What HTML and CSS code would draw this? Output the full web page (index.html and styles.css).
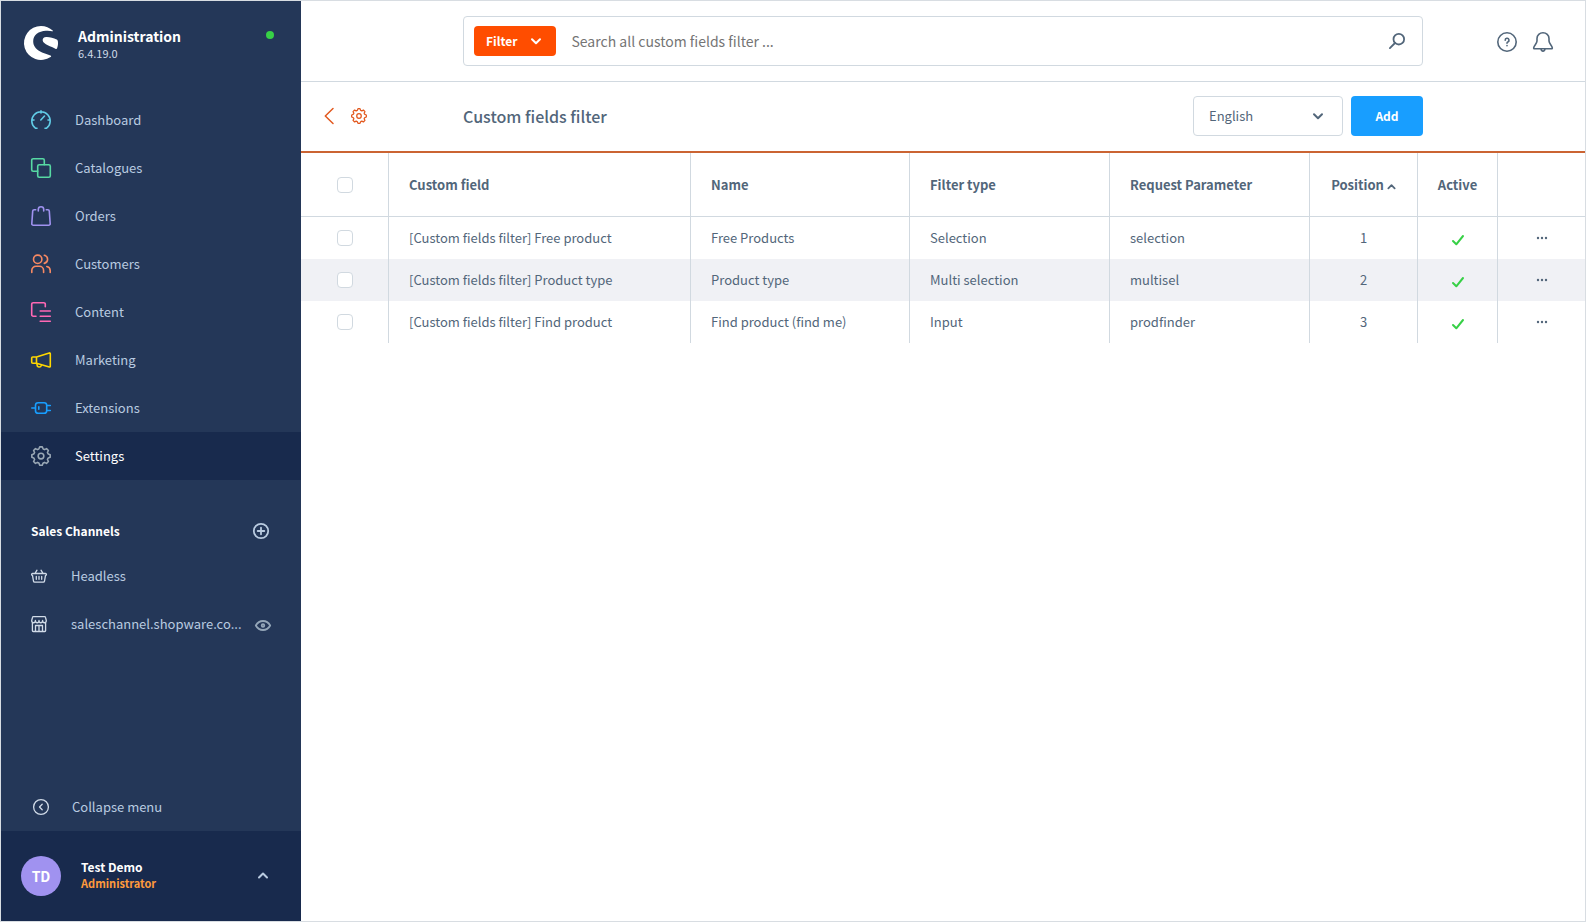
FILE: index.html
```html
<!DOCTYPE html>
<html lang="en">
<head>
<meta charset="utf-8">
<title>Custom fields filter | Administration</title>
<link rel="stylesheet" href="styles.css">
</head>
<body>
<svg class="sprite" aria-hidden="true">
  <symbol id="gear" viewBox="-12 -12 24 24">
    <path d="M-1.5-11 1.5-11Q2.4-8.6 2.7-8.4L4.2-7.7 6.6-8.9 8.9-6.6 7.7-4.2 8.4-2.7Q8.6-2.4 11-1.5L11 1.5Q8.6 2.4 8.4 2.7L7.7 4.2 8.9 6.6 6.6 8.9 4.2 7.7 2.7 8.4Q2.4 8.6 1.5 11L-1.5 11Q-2.4 8.6-2.7 8.4L-4.2 7.7-6.6 8.9-8.9 6.6-7.7 4.2-8.4 2.7Q-8.6 2.4-11 1.5L-11-1.5Q-8.6-2.4-8.4-2.7L-7.7-4.2-8.9-6.6-6.6-8.9-4.2-7.7-2.7-8.4Q-2.4-8.6-1.5-11Z"/>
    <circle r="3.4"/>
  </symbol>
  <symbol id="check" viewBox="0 0 14 12"><path d="M2 7l3.3 3.3L12 2"/></symbol>
  <symbol id="dots" viewBox="0 0 12 4"><circle cx="2" cy="2" r="1.2"/><circle cx="6" cy="2" r="1.2"/><circle cx="10" cy="2" r="1.2"/></symbol>
</svg>
<div class="app">
  <aside class="sidebar">
    <header class="brand">
      <svg class="logo" viewBox="0 0 34 34" aria-hidden="true">
        <path d="M28.7 4.6C25.700 1.900 21.500 0 17 0A17 17 0 1 0 26.600 31C27.400 30.400 27.300 29.800 26.400 29.400C20 27.200 9.200 24.500 9.200 15.200C9.200 9 14.500 5.200 22 4.800C24.500 4.600 26.500 4.900 28.200 5.300C29.100 5.500 29.200 5 28.700 4.600Z"/>
        <path d="M33.900 15.600C33.700 14.500 33.400 14.100 32.700 13.600C29.500 11.600 25.500 10.800 22.300 10.900C19.800 11 18.400 12.500 18.700 14.400C19.200 18.300 27.500 20.300 31.800 22.900C32.400 23.200 32.800 23 33.100 22.300C33.900 20.200 34.200 17.900 33.900 15.600Z"/>
      </svg>
      <div class="brand-text">
        <strong class="brand-name">Administration</strong>
        <span class="brand-version">6.4.19.0</span>
      </div>
      <span class="status-dot"></span>
    </header>
    <nav class="nav" aria-label="Main">
      <a class="nav-item" href="#"><svg class="icon-20 cyan" viewBox="0 0 20 20"><path d="M6 18.200H4.400A9.200 9.200 0 1 1 15.600 18.200H14M10 .9V3M.9 10H3M17 10h2.100M9.800 10 13.500 6"/></svg>Dashboard</a>
      <a class="nav-item" href="#"><svg class="icon-20 green" viewBox="0 0 20 20"><path d="M6.700 13.300H2.200A1.500 1.500 0 0 1 .7 11.800V2.200A1.500 1.500 0 0 1 2.200.7h9.600a1.500 1.500 0 0 1 1.500 1.500v4.500"/><rect x="6.700" y="6.700" width="12.600" height="12.600" rx="1.500"/></svg>Catalogues</a>
      <a class="nav-item" href="#"><svg class="icon-20 purple" viewBox="0 0 20 20"><path d="M4.700 3.700H3.200A1.500 1.500 0 0 0 1.700 5.100L.8 17.700a1.500 1.500 0 0 0 1.500 1.600h15.400a1.500 1.500 0 0 0 1.500-1.600l-.9-12.600a1.500 1.500 0 0 0-1.500-1.400H15.300M7.300 5V3.300a2.700 2.600 0 0 1 5.400 0V5"/></svg>Orders</a>
      <a class="nav-item" href="#"><svg class="icon-20 coral" viewBox="0 0 20 20"><circle cx="6.700" cy="5.300" r="4.200"/><path d="M.8 18.500v-2a4.200 4.200 0 0 1 4.200-4.200h3.400a4.200 4.200 0 0 1 4.200 4.200v2M13.300 1.200a4.200 4.200 0 0 1 0 8.200M15.800 12.500a4.200 4.200 0 0 1 3.400 4v2"/></svg>Customers</a>
      <a class="nav-item" href="#"><svg class="icon-20 pink" viewBox="0 0 20 20"><path d="M5 14.200H2.200A1.500 1.500 0 0 1 .7 12.700V2.200A1.500 1.500 0 0 1 2.200.7h10.600a1.500 1.500 0 0 1 1.500 1.500v2.600M9.200 9h10.100M9.200 14.200h10.100M9.200 19.300h10.100"/></svg>Content</a>
      <a class="nav-item" href="#"><svg class="icon-20 yellow" viewBox="0 0 20 20"><path d="M5.500 7H1.700a1 1 0 0 0-1 1v4.200a1 1 0 0 0 1 1h3.800M5.500 7v6.200L18.300 17a.8.8 0 0 0 1-.8V3.700a.8.8 0 0 0-1-.8L5.500 7M6 13.500v1.200a2.200 2.200 0 0 0 4.300.7"/></svg>Marketing</a>
      <a class="nav-item" href="#"><svg class="icon-20 blue" viewBox="0 0 20 20"><path d="M.8 10h3.600M15.800 7.500h3.500M15.800 12.500h3.500M7.800 8.800v2.400"/><rect x="4.500" y="4.700" width="11.200" height="10.600" rx="2.600"/></svg>Extensions</a>
      <a class="nav-item active" href="#" aria-current="page"><svg class="icon-20 gray" viewBox="0 0 20 20"><use href="#gear" width="20" height="20"/></svg>Settings</a>
    </nav>
    <section class="channels">
      <div class="channels-head">
        <h2 class="channels-title">Sales Channels</h2>
        <button class="icon-btn" type="button" aria-label="Add sales channel"><svg class="icon-16 bold" viewBox="0 0 16 16"><circle cx="8" cy="8" r="7.200"/><path d="M8 4.700v6.600M4.700 8h6.600"/></svg></button>
      </div>
      <a class="channel" href="#"><svg class="icon-16 light" viewBox="0 0 16 16"><path d="M1.500 5.500h13a.9.9 0 0 1 .9 1.100.9.9 0 0 1-.9.800l-1 5.800a1.200 1.200 0 0 1-1.200 1H3.700a1.200 1.200 0 0 1-1.200-1l-1-5.800a.9.9 0 0 1-.9-.8.9.9 0 0 1 .9-1.100ZM4 5.300 6 2.200M12 5.300l-2-3.100M5.300 8.500v2.800M8 8.500v2.800M10.700 8.500v2.800"/></svg><span class="channel-name">Headless</span></a>
      <a class="channel" href="#"><svg class="icon-16 light" viewBox="0 0 16 16"><path d="M1.400 7v7.700a.8.800 0 0 0 .8.800h11.600a.8.800 0 0 0 .8-.8V7M.7 4.500 1.500 1.400A1 1 0 0 1 2.500.6h11a1 1 0 0 1 1 .8l.8 3.100M.7 4.500c0 3 3.600 3 3.700 0 .1 3 3.500 3 3.600 0 .1 3 3.500 3 3.600 0 .1 3 3.700 3 3.700 0M4.500 15.300V9.500h7v5.800M8 9.500v5.800"/></svg><span class="channel-name">saleschannel.shopware.co...</span><svg class="icon-16 muted" viewBox="0 0 16 16"><path d="M.8 9.500C2.500 6.500 5 5 8 5s5.500 1.500 7.200 4.500C13.500 12.500 11 14 8 14S2.500 12.500.8 9.500Z"/><circle cx="8" cy="9.500" r="1.300"/></svg></a>
    </section>
    <button class="collapse" type="button"><svg class="icon-16 light" viewBox="0 0 16 16"><circle cx="8" cy="8" r="7.400"/><path d="M9.200 5.300 6.500 8l2.700 2.700"/></svg>Collapse menu</button>
    <button class="user" type="button">
      <span class="avatar">TD</span>
      <span class="user-text"><span class="user-name">Test Demo</span><span class="user-role">Administrator</span></span>
      <svg class="icon-10" viewBox="0 0 10 10"><path d="M1 6.500 5 2.500l4 4"/></svg>
    </button>
  </aside>
  <main class="main">
    <header class="topbar">
      <form class="search" role="search">
        <button class="filter-btn" type="button">Filter<svg class="icon-10" viewBox="0 0 10 10"><path d="M1 3.300l4 4 4-4"/></svg></button>
        <input class="search-input" type="search" aria-label="Search" placeholder="Search all custom fields filter ...">
        <button class="icon-btn" type="submit" aria-label="Search"><svg class="icon-16 bold" viewBox="0 0 16 16"><circle cx="9.800" cy="6.200" r="5.300"/><path d="M6 10 .9 15.100"/></svg></button>
      </form>
      <div class="tools">
        <button class="icon-btn" type="button" aria-label="Help"><svg class="icon-20" viewBox="0 0 20 20"><circle cx="10" cy="10" r="9.200"/><path d="M8.200 8.200a1.900 1.900 0 1 1 2.700 1.700c-.6.300-.9.700-.9 1.300M10 13.500v.2"/></svg></button>
        <button class="icon-btn" type="button" aria-label="Notifications"><svg class="icon-20" viewBox="0 0 20 20"><path d="M4 8v-1.500a6 5.800 0 0 1 12 0V9c0 2.500 3 4.500 3.300 6.800.1.700-.3 1-.9 1H1.600c-.6 0-1-.3-.9-1C1 13.500 4 11.500 4 9ZM8 17c.3 2.800 3.700 2.800 4 0"/></svg></button>
      </div>
    </header>
    <div class="pagebar">
      <div class="crumbs">
        <a class="crumb" href="#" aria-label="Back"><svg class="icon-16" viewBox="0 0 16 16"><path d="M12 .5 4.300 8l7.700 7.500"/></svg></a>
        <a class="crumb" href="#" aria-label="Settings"><svg class="icon-16" viewBox="0 0 16 16"><use href="#gear" width="16" height="16"/></svg></a>
      </div>
      <div class="pagebar-main">
        <h1 class="page-title">Custom fields filter</h1>
        <div class="select-wrap">
          <select class="language" aria-label="Language"><option>English</option></select>
          <svg class="icon-10 select-arrow" viewBox="0 0 10 10"><path d="M1 3.300l4 4 4-4"/></svg>
        </div>
        <button class="add-btn" type="button">Add</button>
      </div>
    </div>
    <table class="grid">
      <colgroup><col class="c-check"><col class="c-field"><col><col class="c-type"><col class="c-type"><col class="c-pos"><col class="c-active"><col class="c-actions"></colgroup>
      <thead>
        <tr><th class="center"><input class="check" type="checkbox" aria-label="Select all"></th><th>Custom field</th><th>Name</th><th>Filter type</th><th>Request Parameter</th><th class="center" aria-sort="ascending">Position <svg class="sort" viewBox="0 0 10 10"><path d="M1.500 8.200 5 4.700l3.500 3.500"/></svg></th><th class="center">Active</th><th></th></tr>
      </thead>
      <tbody>
        <tr><td class="center"><input class="check" type="checkbox" aria-label="Select Free Products"></td><td>[Custom fields filter] Free product</td><td>Free Products</td><td>Selection</td><td>selection</td><td class="center">1</td><td class="center"><svg class="tick"><use href="#check"/></svg></td><td class="center"><button class="more" type="button" aria-label="Actions"><svg class="dots"><use href="#dots"/></svg></button></td></tr>
        <tr><td class="center"><input class="check" type="checkbox" aria-label="Select Product type"></td><td>[Custom fields filter] Product type</td><td>Product type</td><td>Multi selection</td><td>multisel</td><td class="center">2</td><td class="center"><svg class="tick"><use href="#check"/></svg></td><td class="center"><button class="more" type="button" aria-label="Actions"><svg class="dots"><use href="#dots"/></svg></button></td></tr>
        <tr><td class="center"><input class="check" type="checkbox" aria-label="Select Find product"></td><td>[Custom fields filter] Find product</td><td>Find product (find me)</td><td>Input</td><td>prodfinder</td><td class="center">3</td><td class="center"><svg class="tick"><use href="#check"/></svg></td><td class="center"><button class="more" type="button" aria-label="Actions"><svg class="dots"><use href="#dots"/></svg></button></td></tr>
      </tbody>
    </table>
  </main>
</div>
</body>
</html>
```

FILE: styles.css
```css
* { box-sizing: border-box; }

body {
  margin: 0;
  font-family: "Source Sans Pro", "Noto Sans CJK SC", "Noto Sans", sans-serif;
  font-size: 13px;
  line-height: 18px;
  color: #52667a;
  background: #fff;
}

button, input, select { font: inherit; color: inherit; }
button { padding: 0; border: 0; background: none; cursor: pointer; }
a { color: inherit; text-decoration: none; }

svg {
  flex: none;
  overflow: visible;
  fill: none;
  stroke: currentColor;
  stroke-width: 1.6;
  stroke-linecap: round;
  stroke-linejoin: round;
}
.sprite { position: absolute; width: 0; height: 0; }
#gear { stroke-width: 1.9; }

.icon-20 { width: 20px; height: 20px; }
.icon-16 { width: 16px; height: 16px; stroke-width: 1.3; }
.icon-10 { width: 10px; height: 10px; stroke-width: 2; }
.icon-16.bold { stroke-width: 1.8; }

.cyan { color: #61cce6; }
.green { color: #57d9a3; }
.purple { color: #a092f0; }
.coral { color: #f88962; }
.pink { color: #ff68b4; }
.yellow { color: #ffd700; }
.blue { color: #189eff; }
.gray { color: #9aa8b5; }
.light { color: #d1dbe8; }
.icon-16.muted { color: #94a6b8; stroke-width: 1.8; }

.app {
  display: flex;
  min-height: 100vh;
  border: 1px solid #d8dde2;
}

/* Sidebar */
.sidebar {
  display: flex;
  flex: none;
  flex-direction: column;
  width: 300px;
  color: #b9cbe0;
  background: #243758;
}
.brand {
  display: flex;
  align-items: flex-start;
  gap: 20px;
  padding: 25px 27px 36px 23px;
}
.logo { width: 34px; height: 34px; fill: #fff; stroke: none; }
.brand-text { display: flex; flex: 1; flex-direction: column; }
.brand-name { font-size: 14px; line-height: 20px; color: #fff; }
.brand-version { font-size: 11px; line-height: 14px; color: #d1dbe8; }
.status-dot {
  width: 8px;
  height: 8px;
  margin-top: 5px;
  border-radius: 50%;
  background: #37d046;
}
.nav-item {
  display: flex;
  align-items: center;
  gap: 24px;
  height: 48px;
  padding: 0 30px;
}
.nav-item.active { color: #fff; background: #182a4d; }

.channels { padding: 30px 30px 0; }
.channels-head {
  display: flex;
  align-items: center;
  justify-content: space-between;
  height: 42px;
  padding-right: 2px;
}
.channels-title { margin: 0; font-size: 12px; line-height: 18px; color: #fff; }
.channel {
  display: flex;
  align-items: center;
  height: 48px;
}
.channel-name {
  flex: 1;
  margin: 0 8px 0 24px;
  white-space: nowrap;
}
.icon-btn { display: flex; }
.collapse {
  display: flex;
  align-items: center;
  gap: 23px;
  height: 48px;
  margin-top: auto;
  padding: 0 32px;
}
.user {
  display: flex;
  align-items: center;
  gap: 20px;
  height: 90px;
  padding: 0 33px 0 20px;
  font-size: 12px;
  font-weight: 700;
  text-align: left;
  background: #182a4d;
}
.avatar {
  width: 40px;
  font-size: 14px;
  line-height: 40px;
  text-align: center;
  color: #fff;
  border-radius: 50%;
  background: #a092f0;
}
.user-text { display: flex; flex: 1; flex-direction: column; padding-bottom: 2px; line-height: 17px; }
.user-name { color: #fff; }
.user-role { font-size: 11px; color: #ff9a3c; }

/* Top bar and page bar */
.main { flex: 1; min-width: 0; }
.topbar, .pagebar {
  display: grid;
  grid-template-columns: 1fr minmax(0, 960px) 1fr;
  align-items: center;
}
.topbar { padding: 15px 0; border-bottom: 1px solid #d1d9e0; }
.search {
  display: flex;
  grid-column: 2;
  align-items: center;
  height: 50px;
  padding: 0 17px 0 10px;
  border: 1px solid #d1d9e0;
  border-radius: 4px;
}
.filter-btn {
  display: flex;
  align-items: center;
  gap: 14px;
  height: 30px;
  padding: 0 15px 0 12px;
  font-size: 12px;
  font-weight: 700;
  color: #fff;
  border-radius: 4px;
  background: #ff4d00;
}
.search-input {
  flex: 1;
  height: 30px;
  padding: 0 15px;
  font-size: 14px;
  border: 0;
  outline: 0;
}
.search-input::placeholder { color: #757575; }
.tools { display: flex; justify-content: flex-end; gap: 16px; padding: 2px 32px 0 0; }

.pagebar { padding: 14px 0 15px; border-bottom: 2px solid #cb6433; }
.crumbs { display: flex; gap: 14px; padding-left: 20px; color: #e2581e; }
.crumb { display: flex; }
.crumb #gear, .crumb svg { stroke-width: 1.5; }
.pagebar-main { display: flex; align-items: center; gap: 8px; }
.page-title { flex: 1; margin: 0; font-size: 16px; font-weight: 500; line-height: 24px; }
.select-wrap { position: relative; width: 150px; }
.language {
  display: block;
  width: 100%;
  height: 40px;
  padding: 0 15px;
  border: 1px solid #d1d9e0;
  border-radius: 4px;
  background: #fff;
  appearance: none;
}
.select-arrow { position: absolute; top: 15px; right: 20px; pointer-events: none; }
.add-btn {
  width: 72px;
  height: 40px;
  font-size: 12px;
  font-weight: 700;
  color: #fff;
  border-radius: 4px;
  background: #189eff;
}

/* Data grid */
.grid { width: 100%; table-layout: fixed; border-collapse: separate; border-spacing: 0; }
.c-check { width: 88px; }
.c-field { width: 302px; }
.c-type { width: 200px; }
.c-pos { width: 108px; }
.c-active { width: 80px; }
.c-actions { width: 87px; }
th, td { height: 42px; padding: 0 20px; text-align: left; border-right: 1px solid #d1d9e0; }
th { height: 64px; border-bottom: 1px solid #d1d9e0; white-space: nowrap; }
th:last-child, td:last-child { border-right: 0; }
.center { padding: 0; text-align: center; }
tbody tr:nth-child(even) { background: #f0f1f5; }
.check {
  display: block;
  width: 16px;
  height: 16px;
  margin: 0 auto;
  border: 1px solid #d1d9e0;
  border-radius: 4px;
  background: #fff;
  appearance: none;
}
.sort { width: 9px; height: 9px; stroke-width: 2; }
.tick { display: block; width: 14px; height: 12px; margin: 4px auto 0; color: #37d046; stroke-width: 2; }
.more { display: block; margin: 0 auto; padding: 8px; }
.dots { display: block; width: 12px; height: 4px; fill: currentColor; stroke: none; }
```
